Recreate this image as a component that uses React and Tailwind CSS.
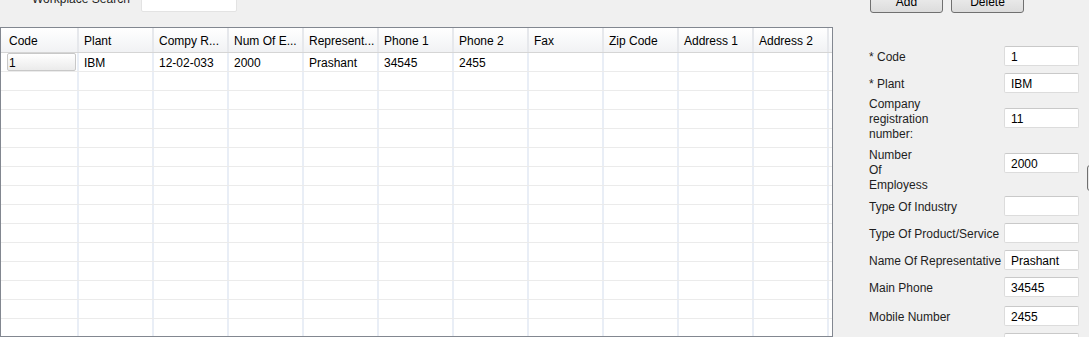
import React from 'react'

const columns = ['Code', 'Plant', 'Compy R...', 'Num Of E...', 'Represent...', 'Phone 1', 'Phone 2', 'Fax', 'Zip Code', 'Address 1', 'Address 2']
const firstRow = ['1', 'IBM', '12-02-033', '2000', 'Prashant', '34545', '2455', '', '', '', '']

const TextBox = ({ value, className = '' }) => (
  <div className={`w-[75px] h-[20px] shrink-0 bg-white border border-[#dcdcdc] border-t-[#c9c9c9] rounded-[2px] pl-[6px] pt-[1px] flex items-center leading-none ${className}`}>
    {value}
  </div>
)

const Button = ({ children, className = '' }) => (
  <button className={`w-[73px] h-[23px] border border-[#707070] rounded-[3px] bg-linear-to-b from-[#f2f2f2] to-[#dcdcdc] text-black leading-none ${className}`}>
    {children}
  </button>
)

const Grid = () => (
  <div className="flex-1 border border-[#828790] bg-white overflow-hidden">
    <div className="h-[25px] flex border-b border-[#d5d5d5] bg-linear-to-b from-white to-[#f1f2f4]">
      {columns.map((c, i) => (
        <div
          key={c}
          className={`${i === 0 ? 'w-[78px] pl-[8px]' : 'w-[75px] pl-[5px]'} shrink-0 flex items-center pt-[2px] border-r-2 border-[#e6e8ec] whitespace-nowrap`}
        >
          {c}
        </div>
      ))}
    </div>
    {Array.from({ length: 15 }).map((_, r) => (
      <div key={r} className="h-[19px] flex border-b border-[#ebebeb]">
        {columns.map((c, i) => (
          <div
            key={c}
            className={`${i === 0 ? 'w-[78px]' : 'w-[75px] pl-[5px]'} shrink-0 flex items-center border-r-2 border-[#e9eef6]`}
          >
            {r === 0 && i === 0 && (
              <div className="ml-[6px] w-[69px] h-[18px] border border-[#c8c8c8] rounded-[2px] bg-linear-to-b from-white to-[#ebebeb] pl-[1px] pt-[1px] flex items-center">
                1
              </div>
            )}
            {r === 0 && i > 0 && <span className="pt-[1px]">{firstRow[i]}</span>}
          </div>
        ))}
      </div>
    ))}
  </div>
)

const FormRow = ({ label, value, className = '', inputClass = '', multi }) => (
  <div className={`flex ${multi ? 'items-start' : 'items-center'} ${className}`}>
    <div className={`w-[135px] shrink-0 text-[#1e1e1e] ${multi ? 'leading-[15px]' : 'h-[20px] leading-[18px] pt-[2px]'}`}>
      {multi ? label.map((l) => <div key={l}>{l}</div>) : label}
    </div>
    <TextBox value={value} className={inputClass} />
  </div>
)

export default function App() {
  return (
    <div className="w-[1089px] h-[337px] overflow-hidden flex bg-[#f0f0f0] text-[12px] text-black font-['Liberation_Sans',Arial,sans-serif]">
      <div className="w-[833px] shrink-0 flex flex-col">
        <div className="h-[27px] shrink-0 flex items-start">
          <div className="w-[141px] pl-[32px] -mt-[9px] leading-[16px] text-[#1e1e1e]">Workplace Search</div>
          <div className="-mt-[8px] w-[96px] h-[20px] bg-white border border-[#e3e3e3] rounded-[2px]" />
        </div>
        <Grid />
      </div>

      <div className="flex shrink-0">
        <div className="w-[246px] shrink-0 pl-[36px] flex flex-col">
          <div className="flex gap-[8px] pl-[1px] -mt-[10px]">
            <Button>Add</Button>
            <Button>Delete</Button>
          </div>
          <FormRow label="* Code" value="1" className="mt-[33px]" />
          <FormRow label="* Plant" value="IBM" className="mt-[7px]" />
          <FormRow label={['Company', 'registration', 'number:']} value="11" multi className="mt-[4px]" inputClass="mt-[11px]" />
          <FormRow label={['Number', 'Of', 'Employess']} value="2000" multi className="mt-[6px]" inputClass="mt-[5px]" />
          <FormRow label="Type Of Industry" value="" className="mt-[3px]" />
          <FormRow label="Type Of Product/Service" value="" className="mt-[7px]" />
          <FormRow label="Name Of Representative" value="Prashant" className="mt-[7px]" />
          <FormRow label="Main Phone" value="34545" className="mt-[7px]" />
          <FormRow label="Mobile Number" value="2455" className="mt-[9px]" />
          <FormRow label="" value="" className="mt-[7px]" />
        </div>
        <div className="ml-[8px] mt-[165px] w-[8px] h-[26px] shrink-0 border border-[#707070] rounded-[3px] bg-[#e8e8e8]" />
      </div>
    </div>
  )
}
